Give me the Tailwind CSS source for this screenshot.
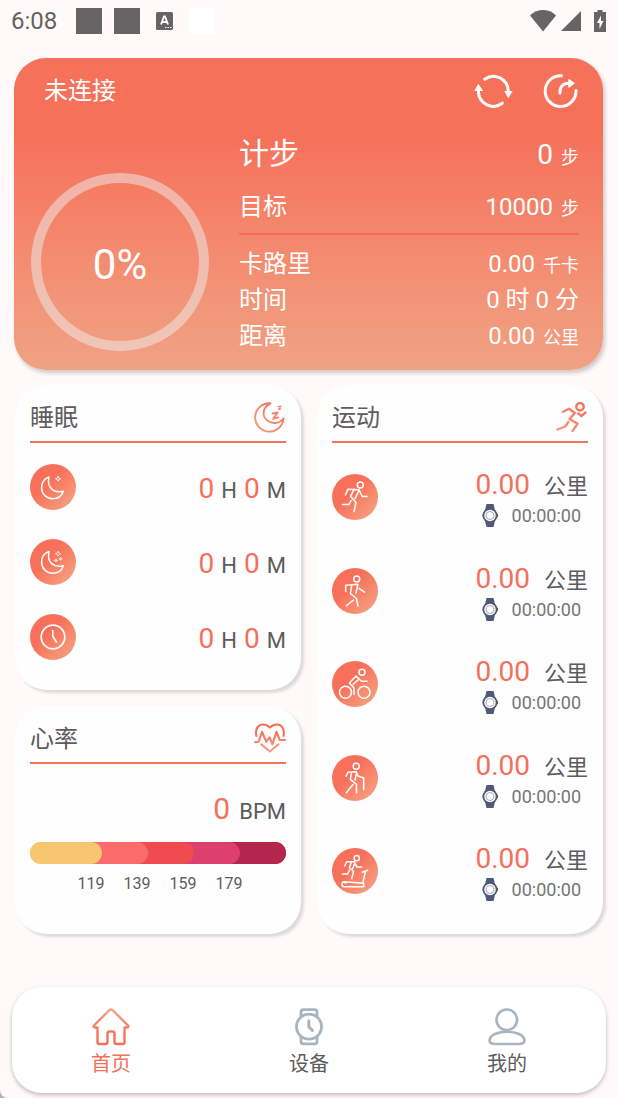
<!DOCTYPE html>
<html lang="zh-CN" class="bg-[#b8b4b3]">
<head>
<meta charset="utf-8">
<meta name="viewport" content="width=device-width, initial-scale=1">
<title>首页</title>
<script src="https://cdn.jsdelivr.net/npm/@tailwindcss/browser@4"></script>
</head>
<body class="flex min-h-screen flex-col rounded-bl-lg bg-[#fffaf9] font-[Roboto,'Noto_Sans_CJK_SC',sans-serif] text-[#5c5c5c]">

<svg class="absolute size-0" aria-hidden="true">
  <defs>
    <linearGradient id="warm" gradientUnits="userSpaceOnUse" x1="28" y1="2" x2="4" y2="28"><stop offset="0" stop-color="#f4705a"/><stop offset="1" stop-color="#f39a7d"/></linearGradient>
    <linearGradient id="warm-down" gradientUnits="userSpaceOnUse" x1="0" y1="8" x2="0" y2="30"><stop offset="0" stop-color="#f4705a"/><stop offset="1" stop-color="#f2a486"/></linearGradient>
    <linearGradient id="warm-up" gradientUnits="userSpaceOnUse" x1="0" y1="28" x2="0" y2="0"><stop offset="0" stop-color="#f4705a"/><stop offset="1" stop-color="#f2a486"/></linearGradient>
    <symbol id="watch" viewBox="0 0 16 23">
      <path d="M4.500 0h7l1.300 5.500v12L11.500 23h-7l-1.300-5.500v-12z" fill="#4f5a7a"/>
      <circle cx="8" cy="11.500" r="7.600" fill="#4f5a7a"/><rect x="14.600" y="10" width="1.400" height="3" fill="#4f5a7a"/>
      <circle cx="8" cy="11.500" r="5.700" fill="#fff"/><circle cx="8" cy="11.500" r="4" fill="#fff" stroke="#8d94a9" stroke-width=".8"/>
    </symbol>
  </defs>
</svg>

<div class="flex h-[42px] items-center pr-3 pl-[11px]">
  <span class="text-2xl font-normal text-[#646262]">6:08</span>
  <span class="ml-[19px] size-[26px] bg-[#666464]"></span>
  <span class="ml-3 size-[26px] bg-[#666464]"></span>
  <svg class="ml-4 h-[18px] w-[17px]" viewBox="0 0 17 18"><rect width="17" height="18" rx="1.500" fill="#666464"/><path d="M5 12.500 8 4.500h1l3 8M6.300 10h4.400" fill="none" stroke="#fff" stroke-width="1.800"/><path d="M9 15.500h1.500m1 0H13m1 0h1.500" stroke="#fff" stroke-width="1.200"/></svg>
  <span class="ml-4 size-[26px] bg-white"></span>
  <svg class="ml-auto h-[22px] w-[26px]" viewBox="0 0 26 22"><path d="M0 5.500C7.500-1.800 18.500-1.800 26 5.500L13 21.500z" fill="#666464"/></svg>
  <svg class="ml-[5px] size-5" viewBox="0 0 20 20"><path d="M20 0v20H0z" fill="#666464"/></svg>
  <svg class="ml-[13px] h-[22px] w-3" viewBox="0 0 12 22"><path d="M3.500 0h5v2H12v20H0V2h3.500z" fill="#666464"/><path d="M7 5.500 3 13h2.500v6L9.500 11H7z" fill="#fff"/></svg>
</div>

<main class="pr-[15px] pl-[14px] pt-4">
  <section class="h-[312px] rounded-[32px] bg-linear-to-b from-[#f5715a] from-25% to-[#f0a284] px-6 pl-[17px] text-white shadow-[2px_3px_4px_rgba(0,0,0,0.2)]">
    <header class="flex h-[66px] items-center justify-end pl-[13px]">
      <h1 class="mr-auto text-2xl">未连接</h1>
      <button type="button" aria-label="刷新" class="h-9 w-10">
        <svg viewBox="0 0 40 36" fill="none" stroke="#fff" stroke-width="3" stroke-linecap="round"><path d="M10.700 6.200A14.800 14.800 0 0 1 34.200 18M4.500 18a14.800 14.800 0 0 0 23.800 12.200"/><path d="M30.300 18h8.400l-4.400 7.300zM.3 18h9L4.300 10.700z" fill="#fff" stroke="none"/></svg>
      </button>
      <button type="button" aria-label="分享" class="ml-[29px] h-9 w-9">
        <svg viewBox="0 0 36 36" fill="none" stroke="#fff" stroke-width="3" stroke-linecap="round"><path d="M18.500 2.700a15.400 15.400 0 1 0 14.500 14.800M17 20.200c-.5-6.500 3-10 9-10"/><path d="m26 6.800 4.800 3.600L26 14z" fill="#fff" stroke-width="1.500" stroke-linejoin="round"/></svg>
      </button>
    </header>
    <div class="flex items-start gap-[30px]">
      <div class="mt-[49px] flex size-[178px] shrink-0 items-center justify-center rounded-full border-[10px] border-[#eeeeee]/50 pt-1 text-[42px]">0%</div>
      <dl class="flex-1 text-2xl leading-9">
        <div class="flex h-[60px] items-baseline justify-between leading-[60px]"><dt class="text-3xl leading-[60px]">计步</dt><dd class="flex items-baseline gap-2 text-[28px]">0 <small class="text-lg leading-none">步</small></dd></div>
        <div class="mb-[11px] flex items-baseline justify-between border-b-2 border-[#f86a5c] pt-1 pb-[7px] leading-[38px]"><dt>目标</dt><dd class="flex items-baseline gap-2">10000 <small class="text-lg leading-none">步</small></dd></div>
        <div class="flex items-baseline justify-between"><dt>卡路里</dt><dd class="flex items-baseline gap-2">0.00 <small class="text-lg leading-none">千卡</small></dd></div>
        <div class="flex items-baseline justify-between"><dt>时间</dt><dd>0 时 0 分</dd></div>
        <div class="flex items-baseline justify-between leading-[37px]"><dt>距离</dt><dd class="flex items-baseline gap-2">0.00 <small class="text-lg leading-none">公里</small></dd></div>
      </dl>
    </div>
  </section>

  <div class="mt-[15px] grid grid-cols-2 gap-4 pl-px">
    <div class="flex flex-col gap-4">
      <section class="h-[305px] rounded-[32px] bg-[#fefefe] px-[15px] shadow-[3px_3px_3px_rgba(0,0,0,0.13)]">
        <header class="flex h-[58px] items-center justify-between border-b-2 border-[#f4735d] pt-2">
          <h2 class="pt-0.5 text-2xl">睡眠</h2>
          <svg class="mr-px size-[31px]" viewBox="0 0 31 31" fill="none" stroke="url(#warm)" stroke-width="1.900" stroke-linejoin="round" stroke-linecap="round"><path d="M16.500 1.300A14.200 14.200 0 1 0 29.500 16.500C26 21 20 22.500 15 19.500 7.500 15.500 7.500 6 16.500 1.300z"/><path d="m18.700 11.500 5-1-4.500 6.300 5.200-1.500" stroke-width="1.800"/><path d="m24 4.500 3-.5-2.500 3.500 2.500-.7" stroke-width="1.100"/></svg>
        </header>
        <ul class="pt-[21px]">
          <li class="mb-[29px] flex h-[46px] items-center justify-between">
            <span class="size-[46px] rounded-full bg-linear-to-br from-[#f8705a] from-40% to-[#f3a887]"><svg viewBox="0 0 46 46" fill="none" stroke="#fff" stroke-width="1.500" stroke-linejoin="round"><path d="M19 13C13.500 15 11.600 19 11.600 23.500c0 6.500 4.900 11.300 11 11.300 5 0 9.300-2.800 10.700-7.500C24 29.500 16.500 24 19 13z"/><path d="m28 12.200.8 1.800 1.800.7-1.800.8-.8 1.700-.7-1.700-1.800-.8 1.800-.7z" stroke-width=".9"/></svg></span>
            <p class="flex items-baseline gap-[7px] pt-1 text-[22px]"><b class="text-[28px] font-normal text-[#f4705c]">0</b>H<b class="text-[28px] font-normal text-[#f4705c]">0</b>M</p>
          </li>
          <li class="mb-[29px] flex h-[46px] items-center justify-between">
            <span class="size-[46px] rounded-full bg-linear-to-br from-[#f8705a] from-40% to-[#f3a887]"><svg viewBox="0 0 46 46" fill="none" stroke="#fff" stroke-width="1.500" stroke-linejoin="round"><path d="M19 12.500c-5.500 2-7.400 6-7.400 10.500 0 6.500 4.900 11.300 11 11.300 5 0 9.300-2.800 10.700-7.500C24 29 16.500 23.500 19 12.500z"/><path d="m28 12.200.8 1.800 1.800.7-1.800.8-.8 1.700-.7-1.700-1.800-.8 1.800-.7zM30.500 18.200l.4 1.200 1.200.4-1.200.4-.4 1.200-.4-1.200-1.200-.4 1.200-.4zM26 19.900l.4 1.200 1.200.4-1.200.4-.4 1.200-.4-1.200-1.200-.4 1.200-.4z" stroke-width=".8"/></svg></span>
            <p class="flex items-baseline gap-[7px] pt-1 text-[22px]"><b class="text-[28px] font-normal text-[#f4705c]">0</b>H<b class="text-[28px] font-normal text-[#f4705c]">0</b>M</p>
          </li>
          <li class="flex h-[46px] items-center justify-between">
            <span class="size-[46px] rounded-full bg-linear-to-br from-[#f8705a] from-40% to-[#f3a887]"><svg viewBox="0 0 46 46" fill="none" stroke="#fff" stroke-width="1.700" stroke-linecap="round"><circle cx="23" cy="23" r="11.800"/><path d="M22.800 16.500v5.800l3.600 5.800"/></svg></span>
            <p class="flex items-baseline gap-[7px] pt-1 text-[22px]"><b class="text-[28px] font-normal text-[#f4705c]">0</b>H<b class="text-[28px] font-normal text-[#f4705c]">0</b>M</p>
          </li>
        </ul>
      </section>

      <section class="h-[228px] rounded-[32px] bg-[#fefefe] px-[15px] shadow-[3px_3px_3px_rgba(0,0,0,0.13)]">
        <header class="flex h-[58px] items-center justify-between border-b-2 border-[#f4735d] pt-2">
          <h2 class="pt-0.5 text-2xl">心率</h2>
          <svg class="h-[30px] w-8" viewBox="0 0 32 30" fill="none" stroke="url(#warm-down)" stroke-width="2.200" stroke-linejoin="round" stroke-linecap="round"><path d="M2.300 12.800C.8 5.500 4.500 1.500 9 1.500c3 0 5 1 6.900 3 2-2 4-3 7-3 4.500 0 8.100 4 6.600 11.300M1 19h3.500L8 9l4.300 9.800 3.300-4.500 2.700 7L22.500 9l3.200 8H31M7.500 21.500l8.300 7 8.500-7"/></svg>
        </header>
        <p class="flex h-[78px] items-end justify-end pb-[13px]"><span class="flex items-baseline gap-[9px] text-[22px] leading-none"><b class="text-[30px] leading-10 font-normal text-[#f4705c]">0</b>BPM</span></p>
        <div class="grid h-[22px] rounded-full bg-linear-to-r from-[#f8c671] from-50% to-[#b5264c] to-50% *:col-start-1 *:row-start-1 *:rounded-full">
          <i class="ml-[50%] w-[50%] bg-[#b5264c]"></i>
          <i class="ml-[40%] w-[42%] bg-[#dd3f6e]"></i>
          <i class="ml-[30%] w-[34%] bg-[#f04b4e]"></i>
          <i class="ml-[14%] w-[32%] bg-[#f96c6b]"></i>
          <i class="w-[28%] bg-[#f8c671]"></i>
        </div>
        <ol class="mt-2 ml-[38px] grid w-[184px] grid-cols-4 text-center text-base"><li>119</li><li>139</li><li>159</li><li>179</li></ol>
      </section>
    </div>

    <section class="rounded-[32px] bg-[#fefefe] px-[15px] shadow-[3px_3px_3px_rgba(0,0,0,0.13)]">
      <header class="flex h-[58px] items-center justify-between border-b-2 border-[#f4735d] pt-2">
        <h2 class="pt-0.5 text-2xl">运动</h2>
        <svg class="mr-px size-[31px]" viewBox="0 0 31 31" fill="none" stroke="url(#warm)" stroke-width="2.400" stroke-linejoin="round" stroke-linecap="round"><circle cx="24" cy="4.800" r="3.700"/><path d="m7 9.800 6-3 5.800 4.200L13.500 17l8 4.800-5 7.200M12.300 20l-3 4.500L1.500 27.500M22.300 11.300l3 2.900 4.200-3.700"/></svg>
      </header>
      <ul class="pt-[21px]">
        <li class="mb-[29px] flex h-[65px] items-center">
          <span class="mr-auto size-[46px] rounded-full bg-linear-to-br from-[#f8705a] from-40% to-[#f3a887]"><svg viewBox="0 0 46 46" fill="none" stroke="#fff" stroke-width="1.500" stroke-linejoin="round" stroke-linecap="round"><circle cx="28.300" cy="11" r="3"/><path d="m13.500 21 2.300-5.700L27 15.700l3.200 6.800H35M22 15.300l-3.500 7 5.500 6.200-2 9M27 16.500l-4 8.200M19 26.500l-2 4h-6.500"/></svg></span>
          <div class="pt-1.5 text-right"><p class="flex h-8 items-baseline justify-end gap-[14px] text-[22px] leading-8"><b class="text-[28px] font-normal text-[#f4705c]">0.00</b>公里</p><p class="flex h-[29px] items-center justify-end gap-[14px] pr-[7px] text-lg text-[#757575]"><svg class="h-[23px] w-4"><use href="#watch"/></svg>00:00:00</p></div>
        </li>
        <li class="mb-[28px] flex h-[65px] items-center">
          <span class="mr-auto size-[46px] rounded-full bg-linear-to-br from-[#f8705a] from-40% to-[#f3a887]"><svg viewBox="0 0 46 46" fill="none" stroke="#fff" stroke-width="1.500" stroke-linejoin="round" stroke-linecap="round"><circle cx="24.700" cy="10.900" r="3"/><path d="M13.700 23.500v-6.200l12.300-1-2.200 9M19.700 18l-1.300 7.500 6 5L26 38M27 20.300l5.500 3.900M21.500 32l-7 5.700"/></svg></span>
          <div class="pt-1.5 text-right"><p class="flex h-8 items-baseline justify-end gap-[14px] text-[22px] leading-8"><b class="text-[28px] font-normal text-[#f4705c]">0.00</b>公里</p><p class="flex h-[29px] items-center justify-end gap-[14px] pr-[7px] text-lg text-[#757575]"><svg class="h-[23px] w-4"><use href="#watch"/></svg>00:00:00</p></div>
        </li>
        <li class="mb-[29px] flex h-[65px] items-center">
          <span class="mr-auto size-[46px] rounded-full bg-linear-to-br from-[#f8705a] from-40% to-[#f3a887]"><svg viewBox="0 0 46 46" fill="none" stroke="#fff" stroke-width="1.500" stroke-linejoin="round" stroke-linecap="round"><circle cx="30" cy="11.300" r="3"/><circle cx="13.500" cy="31.300" r="6"/><circle cx="32" cy="31.300" r="6"/><path d="M22 33.500V27l-4.600-5 6.600-7 5.500 5.300H35M26.500 18.500l-5.300 4.700"/></svg></span>
          <div class="pt-1.5 text-right"><p class="flex h-8 items-baseline justify-end gap-[14px] text-[22px] leading-8"><b class="text-[28px] font-normal text-[#f4705c]">0.00</b>公里</p><p class="flex h-[29px] items-center justify-end gap-[14px] pr-[7px] text-lg text-[#757575]"><svg class="h-[23px] w-4"><use href="#watch"/></svg>00:00:00</p></div>
        </li>
        <li class="mb-[28px] flex h-[65px] items-center">
          <span class="mr-auto size-[46px] rounded-full bg-linear-to-br from-[#f8705a] from-40% to-[#f3a887]"><svg viewBox="0 0 46 46" fill="none" stroke="#fff" stroke-width="1.500" stroke-linejoin="round" stroke-linecap="round"><circle cx="24.200" cy="11.300" r="3"/><path d="m14 21.300 2-4 8.300-.6L26 21l5.700 2v11.700M19.500 18l-1.200 6.300 6.200 5v8.400M24.500 18.500 23 25M21 29.500l-6.700 8.200"/></svg></span>
          <div class="pt-1.5 text-right"><p class="flex h-8 items-baseline justify-end gap-[14px] text-[22px] leading-8"><b class="text-[28px] font-normal text-[#f4705c]">0.00</b>公里</p><p class="flex h-[29px] items-center justify-end gap-[14px] pr-[7px] text-lg text-[#757575]"><svg class="h-[23px] w-4"><use href="#watch"/></svg>00:00:00</p></div>
        </li>
        <li class="flex h-[65px] items-center">
          <span class="mr-auto size-[46px] rounded-full bg-linear-to-br from-[#f8705a] from-40% to-[#f3a887]"><svg viewBox="0 0 46 46" fill="none" stroke="#fff" stroke-width="1.500" stroke-linejoin="round" stroke-linecap="round"><circle cx="24.700" cy="10.200" r="2.600"/><path d="m12.700 18 2-4.300h7.600l2.500 5.400h4.900M19.300 14.500l-2 5 4.300 4-1.900 7M22.700 15.500 20.500 21M17.500 22l-1.800 4h-5.400M31 34.500l2.400-11.200M30.300 24.300l5.400-2M31.700 35.200l-19.500-1.500c-3-.2-3 5 0 5h19.500zM14 35l-2-1"/></svg></span>
          <div class="pt-1.5 text-right"><p class="flex h-8 items-baseline justify-end gap-[14px] text-[22px] leading-8"><b class="text-[28px] font-normal text-[#f4705c]">0.00</b>公里</p><p class="flex h-[29px] items-center justify-end gap-[14px] pr-[7px] text-lg text-[#757575]"><svg class="h-[23px] w-4"><use href="#watch"/></svg>00:00:00</p></div>
        </li>
      </ul>
    </section>
  </div>
</main>

<nav class="mx-3 mt-auto mb-[5px] grid h-[106px] grid-cols-3 rounded-[30px] bg-white text-xl shadow-[0_2px_4px_rgba(0,0,0,0.25)]">
  <a href="#home" class="flex flex-col items-center gap-1 pt-[21px] text-[#f4705a]" aria-current="page">
    <svg class="size-[38px]" viewBox="0 0 38 38" fill="none" stroke="url(#warm-up)" stroke-width="2.400" stroke-linejoin="round"><path d="M17 2.500 2 17.500c-1 1.200 0 2 1.200 2h2.300V34q0 2 2 2h6q2 0 2-2v-8.500q0-2 2-2h3q2 0 2 2V34q0 2 2 2h6q2 0 2-2V19.500h2.300c1.200 0 2.200-.8 1.200-2L21 2.500q-2-1.800-4 0z"/></svg>
    首页
  </a>
  <a href="#device" class="flex flex-col items-center gap-1 pt-[21px]">
    <svg class="size-[38px]" viewBox="-5 0 38 38" fill="none" stroke="#a9b4c1" stroke-width="2.800" stroke-linecap="round" stroke-linejoin="round"><circle cx="14" cy="18.700" r="12.500"/><path d="M6 8V4q0-2.300 2.300-2.300h11.400Q22 1.700 22 4v4M6 29.500v4q0 2.300 2.300 2.300h11.400q2.300 0 2.300-2.300v-4"/><path d="M13.800 12.800v6l3.700 3.700" stroke-width="3"/></svg>
    设备
  </a>
  <a href="#me" class="flex flex-col items-center gap-1 pt-[21px]">
    <svg class="size-[38px]" viewBox="0 0 38 38" fill="none" stroke="#a9b4c1" stroke-width="2.600"><circle cx="18.800" cy="11.800" r="10.300"/><path d="M7 36c-8 0-6.500-7 0-10 7-3 17-3 24 0 6.500 3 8 10 0 10z"/></svg>
    我的
  </a>
</nav>
</body>
</html>
